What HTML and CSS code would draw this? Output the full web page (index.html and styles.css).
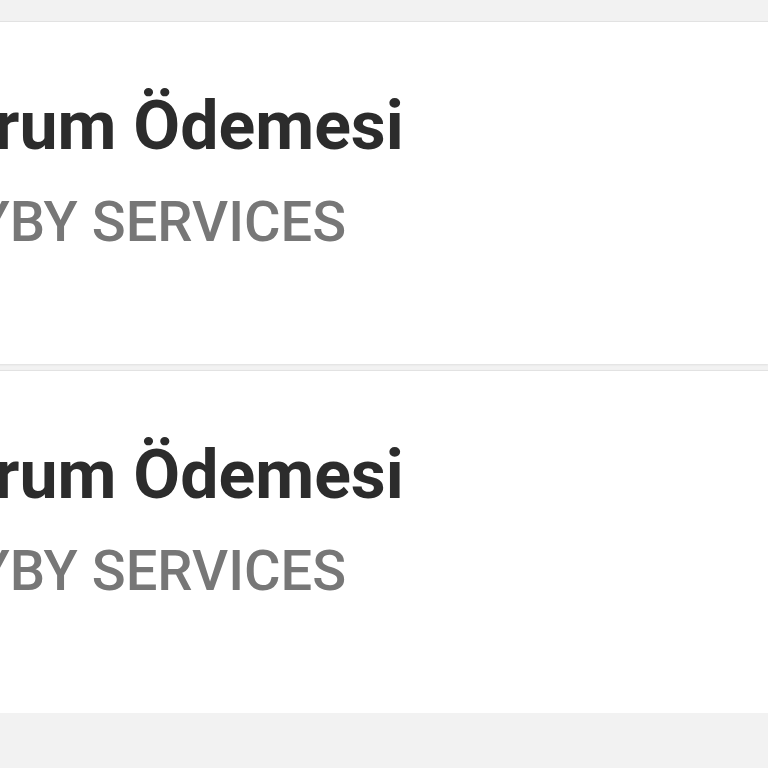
FILE: index.html
```html
<!DOCTYPE html>
<html lang="tr">
<head>
  <meta charset="UTF-8">
  <meta name="viewport" content="width=device-width, initial-scale=1">
  <title>Ödemeler</title>
  <link rel="stylesheet" href="styles.css">
</head>
<body>

  <div class="list">
    <!-- Ödeme kalemi -->
    <div class="item">
      <div class="item-title">Kurum Ödemesi</div>
      <div class="item-sub">PAYBY SERVICES</div>
    </div>

    <div class="item">
      <div class="item-title">Kurum Ödemesi</div>
      <div class="item-sub">PAYBY SERVICES</div>
    </div>
  </div>

</body>
</html>
```

FILE: styles.css
```css
body {
  font-family: Roboto, "Noto Sans", sans-serif;
  background-color: #f2f2f2;
  margin: 0;
  overflow: hidden;
}
.list {
  padding-top: 21px;
  display: flex;
  flex-direction: column;
  gap: 6px;
}
.item {
  background-color: white;
  border-top: 1px solid #e2e2e2;
  box-shadow: 0 1px 2px rgba(0, 0, 0, 0.08);
  height: 343px;
  box-sizing: border-box;
  padding-top: 64px;
  margin-left: -86px;
}
.item-title {
  font-size: 68px;
  font-weight: bold;
  color: #2c2c2c;
  line-height: 80px;
}
.item-sub {
  font-size: 56px;
  font-weight: 500;
  color: #777777;
  line-height: 66px;
  margin-top: 23px;
  margin-left: -4px;
}
```
